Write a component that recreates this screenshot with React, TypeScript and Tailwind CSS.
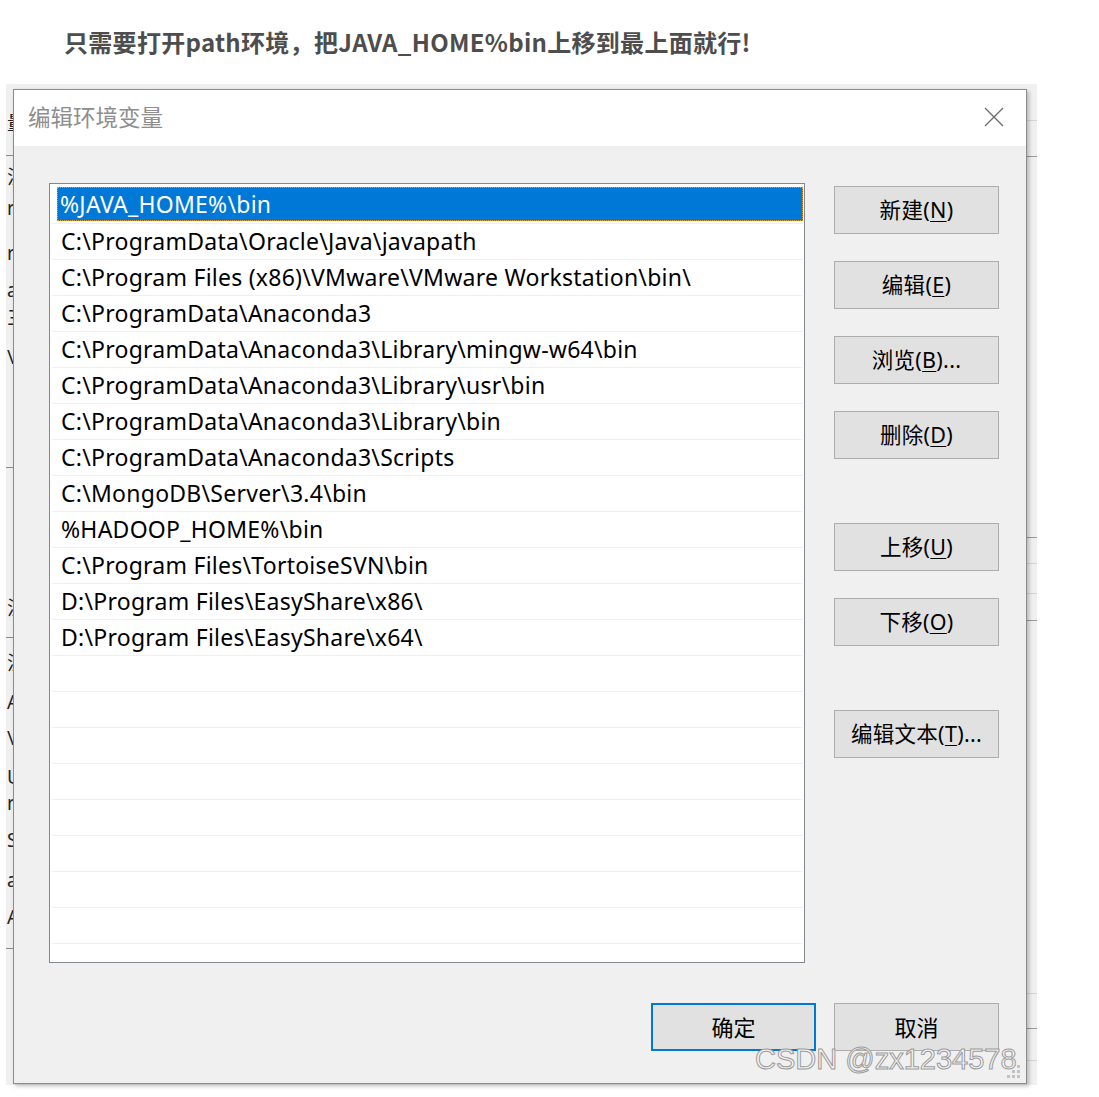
import React from "react";

const paths = [
  "%JAVA_HOME%\\bin",
  "C:\\ProgramData\\Oracle\\Java\\javapath",
  "C:\\Program Files (x86)\\VMware\\VMware Workstation\\bin\\",
  "C:\\ProgramData\\Anaconda3",
  "C:\\ProgramData\\Anaconda3\\Library\\mingw-w64\\bin",
  "C:\\ProgramData\\Anaconda3\\Library\\usr\\bin",
  "C:\\ProgramData\\Anaconda3\\Library\\bin",
  "C:\\ProgramData\\Anaconda3\\Scripts",
  "C:\\MongoDB\\Server\\3.4\\bin",
  "%HADOOP_HOME%\\bin",
  "C:\\Program Files\\TortoiseSVN\\bin",
  "D:\\Program Files\\EasyShare\\x86\\",
  "D:\\Program Files\\EasyShare\\x64\\",
];

const FONT = { fontFamily: '"Noto Sans", "Noto Sans CJK SC", sans-serif' };

function Btn({ label, k, suffix = "" }: { label: string; k: string; suffix?: string }) {
  return (
    <div className="w-[165px] h-[48px] flex items-center justify-center bg-[#e1e1e1] text-[21.5px] tracking-[0.3px] text-black border border-[#adadad]">
      <span>
        {label}(<span className="underline underline-offset-[3px] decoration-1">{k}</span>){suffix}
      </span>
    </div>
  );
}

function PlainBtn({ label, primary = false }: { label: string; primary?: boolean }) {
  return (
    <div
      className={
        "w-[165px] h-[48px] flex items-center justify-center bg-[#e1e1e1] text-[22px] text-black " +
        (primary ? "border-2 border-[#0078d7]" : "border border-[#adadad]")
      }
    >
      {label}
    </div>
  );
}

const leftItems: { mt: number; t?: string; line?: boolean }[] = [
  { mt: 29, t: "量" },
  { mt: 22, line: true },
  { mt: 11, t: "注" },
  { mt: 11, t: "r" },
  { mt: 25, t: "r" },
  { mt: 17, t: "a" },
  { mt: 8, t: "三" },
  { mt: 19, t: "\\" },
  { mt: 100, line: true },
  { mt: 130, t: "注" },
  { mt: 19, line: true },
  { mt: 15, t: "注" },
  { mt: 19, t: "A" },
  { mt: 16, t: "\\" },
  { mt: 19, t: "U" },
  { mt: 6, t: "r" },
  { mt: 17, t: "S" },
  { mt: 20, t: "a" },
  { mt: 17, t: "A" },
  { mt: 21, line: true },
];

const rightLines: { mt: number; c: string }[] = [
  { mt: 36, c: "bg-[#d4d4d4]" },
  { mt: 35, c: "bg-[#9a9a9a]" },
  { mt: 380, c: "bg-[#9a9a9a]" },
  { mt: 25, c: "bg-[#d4d4d4]" },
  { mt: 29, c: "bg-[#d4d4d4]" },
  { mt: 26, c: "bg-[#9a9a9a]" },
  { mt: 372, c: "bg-[#d4d4d4]" },
  { mt: 34, c: "bg-[#9a9a9a]" },
  { mt: 31, c: "bg-[#d4d4d4]" },
];

export default function App() {
  const empties = 9;
  return (
    <div className="w-[1099px] h-[1097px] bg-white overflow-hidden" style={FONT}>
      <div
        className="h-[84px] pl-[64px] pt-[26px] text-[24px] leading-[32px] tracking-[0.3px] font-bold text-[#4d4d4d]"
        style={{ fontFamily: '"Noto Sans CJK SC", "Noto Sans", sans-serif' }}
      >
        只需要打开path环境，把JAVA_HOME%bin上移到最上面就行!
      </div>

      <div className="ml-[6px] w-[1031px] h-[1001px] bg-[#f0f0f0] flex relative">
        {/* background window fragments on the left */}
        <div className="w-[7px] overflow-hidden flex flex-col text-[19px] leading-[20px] text-[#222]">
          {leftItems.map((it, i) =>
            it.line ? (
              <div key={i} className="h-px w-full bg-[#8a8a8a] shrink-0" style={{ marginTop: it.mt }} />
            ) : (
              <div key={i} className="h-[20px] shrink-0 whitespace-nowrap pl-[1px]" style={{ marginTop: it.mt }}>
                {it.t}
              </div>
            )
          )}
        </div>

        {/* dialog */}
        <div className="mt-[5px] w-[1014px] h-[995px] border border-[#8c8c8c] flex flex-col shadow-[2px_2px_4px_rgba(0,0,0,0.25)] relative z-10">
          <div className="h-[56px] bg-white flex items-center justify-between pl-[14px] pr-[22px]">
            <span
              className="text-[22.5px] leading-[30px] text-[#8e8e8e] mt-[-5px]"
              style={{ fontFamily: '"Noto Sans CJK SC", sans-serif' }}
            >
              编辑环境变量
            </span>
            <svg width="20" height="20" viewBox="0 0 20 20" className="mt-[-2px]">
              <path d="M1 1 L19 19 M19 1 L1 19" stroke="#6b6b6b" strokeWidth="1.3" fill="none" />
            </svg>
          </div>
          <div className="flex-1 bg-[#f0f0f0] flex flex-col relative">
            <div className="flex">
              {/* list box */}
              <div className="ml-[35px] mt-[37px] w-[756px] h-[780px] bg-white border border-[#828790] overflow-hidden">
                <div className="pt-[3px] pl-[2px] pr-[1px] text-[23px] tracking-[0.25px] text-black">
                  {paths.map((p, i) =>
                    i === 0 ? (
                      <div key={i} className="h-[36px] pl-[5px]">
                        <div className="h-[34px] bg-[#0078d7] text-white flex items-center pl-[3px] outline outline-1 outline-dotted outline-[#e39b3c] -outline-offset-1">
                          {p}
                        </div>
                      </div>
                    ) : (
                      <div key={i} className="h-[36px] border-t border-[#f0f0f0] flex items-center pl-[9px] whitespace-nowrap">
                        {p}
                      </div>
                    )
                  )}
                  {Array.from({ length: empties }).map((_, i) => (
                    <div key={"e" + i} className="h-[36px] border-t border-[#f0f0f0]" />
                  ))}
                </div>
              </div>

              {/* right buttons */}
              <div className="ml-[29px] mt-[40px] flex flex-col">
                <Btn label="新建" k="N" />
                <div className="mt-[27px]"><Btn label="编辑" k="E" /></div>
                <div className="mt-[27px]"><Btn label="浏览" k="B" suffix="..." /></div>
                <div className="mt-[27px]"><Btn label="删除" k="D" /></div>
                <div className="mt-[64px]"><Btn label="上移" k="U" /></div>
                <div className="mt-[27px]"><Btn label="下移" k="O" /></div>
                <div className="mt-[64px]"><Btn label="编辑文本" k="T" suffix="..." /></div>
              </div>
            </div>

            <div className="mt-[40px] flex justify-end gap-[18px] pr-[27px]">
              <PlainBtn label="确定" primary />
              <PlainBtn label="取消" />
            </div>

            {/* resize grip */}
            <svg width="16" height="16" viewBox="0 0 16 16" className="absolute right-[4px] bottom-[3px]">
              <rect x="11" y="1" width="3" height="3" fill="#c2c2c2" />
              <rect x="6" y="6" width="3" height="3" fill="#c2c2c2" />
              <rect x="11" y="6" width="3" height="3" fill="#c2c2c2" />
              <rect x="1" y="11" width="3" height="3" fill="#c2c2c2" />
              <rect x="6" y="11" width="3" height="3" fill="#c2c2c2" />
              <rect x="11" y="11" width="3" height="3" fill="#c2c2c2" />
            </svg>
          </div>
        </div>

        {/* background window fragments on the right */}
        <div className="w-[10px] flex flex-col">
          {rightLines.map((l, i) => (
            <div key={i} className={"h-px w-full shrink-0 " + l.c} style={{ marginTop: l.mt }} />
          ))}
        </div>

        {/* watermark */}
        <div
          className="absolute left-[749px] top-[958px] z-20 text-[29px] leading-[34px] text-[#f6f6f6] [-webkit-text-stroke:1px_#9b9b9b] whitespace-nowrap"
          style={{ fontFamily: '"Liberation Sans", Arial, sans-serif' }}
        >
          CSDN @zx1234578
        </div>
      </div>
    </div>
  );
}
